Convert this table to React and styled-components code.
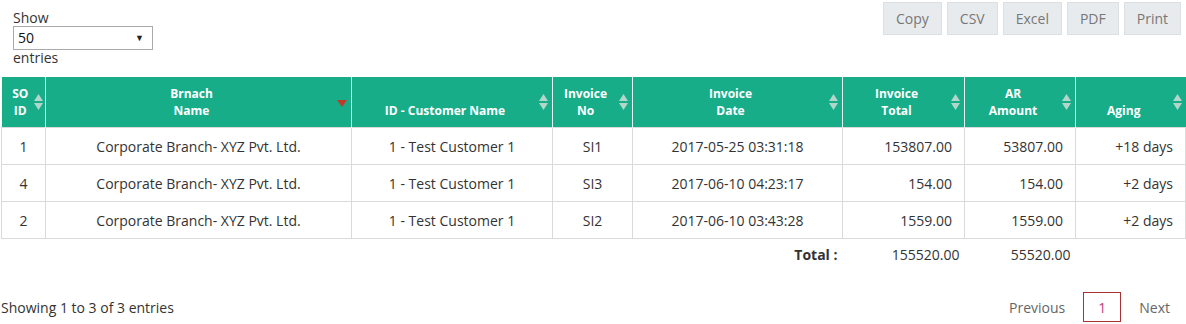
import React from "react";
import styled, { createGlobalStyle } from "styled-components";

const GlobalStyle = createGlobalStyle`
  body {
    margin: 0;
    background: #fff;
    font-family: "Open Sans", "Noto Sans", sans-serif;
    color: #333;
  }
`;

const columns = [
  { key: "so", label: ["SO", "ID"], width: 44, align: "center" },
  { key: "branch", label: ["Brnach", "Name"], width: 306, align: "center", sorted: true },
  { key: "customer", label: ["ID - Customer Name"], width: 201, align: "center" },
  { key: "invNo", label: ["Invoice", "No"], width: 80, align: "center" },
  { key: "date", label: ["Invoice", "Date"], width: 210, align: "center" },
  { key: "total", label: ["Invoice", "Total"], width: 122, align: "right" },
  { key: "ar", label: ["AR", "Amount"], width: 111, align: "right" },
  { key: "aging", label: ["Aging"], width: 110, align: "right" },
];

const rows = [
  { so: "1", branch: "Corporate Branch- XYZ Pvt. Ltd.", customer: "1 - Test Customer 1", invNo: "SI1", date: "2017-05-25 03:31:18", total: "153807.00", ar: "53807.00", aging: "+18 days" },
  { so: "4", branch: "Corporate Branch- XYZ Pvt. Ltd.", customer: "1 - Test Customer 1", invNo: "SI3", date: "2017-06-10 04:23:17", total: "154.00", ar: "154.00", aging: "+2 days" },
  { so: "2", branch: "Corporate Branch- XYZ Pvt. Ltd.", customer: "1 - Test Customer 1", invNo: "SI2", date: "2017-06-10 03:43:28", total: "1559.00", ar: "1559.00", aging: "+2 days" },
];

function SortIcon({ active }) {
  if (active) {
    return (
      <SortBox>
        <svg width="10" height="10" viewBox="0 0 10 10">
          <polygon points="0,3 10,3 5,10" fill="#c0392b" />
        </svg>
      </SortBox>
    );
  }
  return (
    <SortBox>
      <svg width="9" height="16" viewBox="0 0 9 16">
        <polygon points="4.5,0 9,7 0,7" fill="#b2d6ca" />
        <polygon points="0,9 9,9 4.5,16" fill="#b2d6ca" />
      </svg>
    </SortBox>
  );
}

function App() {
  return (
    <Page>
      <GlobalStyle />
      <TopBar>
        <LengthControl>
          <span>Show</span>
          <Select>
            <span>50</span>
            <Arrow>▼</Arrow>
          </Select>
          <span>entries</span>
        </LengthControl>
        <ButtonGroup>
          {["Copy", "CSV", "Excel", "PDF", "Print"].map((b) => (
            <ExportButton key={b}>{b}</ExportButton>
          ))}
        </ButtonGroup>
      </TopBar>

      <Table>
        <colgroup>
          {columns.map((c) => (
            <col key={c.key} style={{ width: c.width }} />
          ))}
        </colgroup>
        <thead>
          <tr>
            {columns.map((c) => (
              <HeadCell key={c.key}>
                {c.label.map((l, i) => (
                  <div key={i}>{l}</div>
                ))}
                <SortIcon active={c.sorted} />
              </HeadCell>
            ))}
          </tr>
        </thead>
        <tbody>
          {rows.map((r, i) => (
            <tr key={i}>
              {columns.map((c) => (
                <BodyCell key={c.key} $align={c.align}>
                  {r[c.key]}
                </BodyCell>
              ))}
            </tr>
          ))}
        </tbody>
        <tfoot>
          <tr>
            <FootCell colSpan={4} />
            <FootCell $align="right" $bold>Total :</FootCell>
            <FootCell $align="right">155520.00</FootCell>
            <FootCell $align="right">55520.00</FootCell>
            <FootCell />
          </tr>
        </tfoot>
      </Table>

      <BottomBar>
        <Info>Showing 1 to 3 of 3 entries</Info>
        <Pager>
          <PageLink>Previous</PageLink>
          <PageLink $current>1</PageLink>
          <PageLink>Next</PageLink>
        </Pager>
      </BottomBar>
    </Page>
  );
}

const Page = styled.div`
  width: 1186px;
  padding: 0 1px;
  box-sizing: border-box;
`;

const TopBar = styled.div`
  display: flex;
  justify-content: space-between;
  align-items: flex-start;
  height: 77px;
`;

const LengthControl = styled.div`
  display: flex;
  flex-direction: column;
  align-items: flex-start;
  margin: 10px 0 0 12px;
  font-size: 14px;
  line-height: 16px;
`;

const Select = styled.div`
  width: 140px;
  height: 24px;
  box-sizing: border-box;
  border: 1px solid #a9a9a9;
  display: flex;
  align-items: center;
  justify-content: space-between;
  padding: 0 8px 0 4px;
  font-size: 14px;
  color: #111;
`;

const Arrow = styled.span`
  font-size: 9px;
  color: #222;
`;

const ButtonGroup = styled.div`
  display: flex;
  gap: 5px;
  margin: 2px 4px 0 0;
`;

const ExportButton = styled.button`
  height: 33px;
  padding: 0 12px;
  background: #e8ebed;
  border: 1px solid #dde0e2;
  color: #777;
  font-family: "Open Sans", sans-serif;
  font-size: 14px;
  border-radius: 0;
`;

const Table = styled.table`
  width: 1184px;
  table-layout: fixed;
  border-collapse: collapse;
`;

const HeadCell = styled.th`
  position: relative;
  height: 50px;
  box-sizing: border-box;
  padding: 8px 18px 8px 4px;
  background: #17ad89;
  color: #fff;
  font-size: 12px;
  font-weight: 700;
  line-height: 17px;
  text-align: center;
  vertical-align: bottom;
  border-left: 1px solid #e6f6f1;
  &:first-child {
    border-left: 0;
    padding: 8px 8px 8px 2px;
  }
`;

const SortBox = styled.span`
  position: absolute;
  right: 4px;
  top: 50%;
  transform: translateY(-50%);
  display: flex;
  line-height: 0;
  th:first-child & {
    right: 2px;
  }
`;

const BodyCell = styled.td`
  height: 37px;
  box-sizing: border-box;
  padding: 0 12px;
  border: 1px solid #dadada;
  font-size: 14px;
  text-align: ${(p) => p.$align};
`;

const FootCell = styled.td`
  height: 30px;
  padding: 0 5px;
  font-size: 14px;
  font-weight: ${(p) => (p.$bold ? 700 : 400)};
  text-align: ${(p) => p.$align || "left"};
`;

const BottomBar = styled.div`
  display: flex;
  justify-content: space-between;
  align-items: center;
  margin-top: 23px;
`;

const Info = styled.div`
  font-size: 14px;
`;

const Pager = styled.div`
  display: flex;
  align-items: center;
`;

const PageLink = styled.span`
  display: inline-flex;
  align-items: center;
  justify-content: center;
  height: 30px;
  box-sizing: border-box;
  padding: 0 ${(p) => (p.$current ? "14px" : "17px")};
  min-width: ${(p) => (p.$current ? "38px" : "auto")};
  font-size: 14px;
  color: ${(p) => (p.$current ? "#c04080" : "#666")};
  border: 1px solid ${(p) => (p.$current ? "#a83232" : "transparent")};
  &:last-child {
    padding-right: 14px;
  }
`;

export default App;
